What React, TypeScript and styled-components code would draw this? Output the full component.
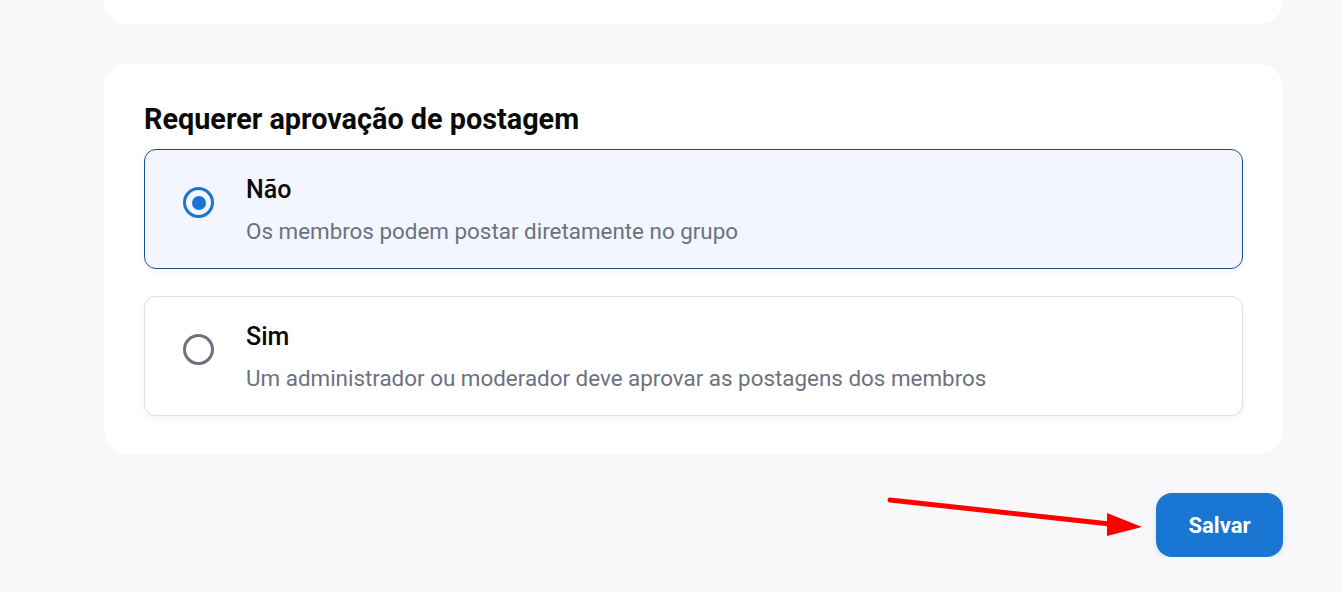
import React, { useState } from "react";
import styled, { createGlobalStyle } from "styled-components";

const GlobalStyle = createGlobalStyle`
  html, body {
    margin: 0;
    padding: 0;
    background: #f8f8fb;
    font-family: Roboto, "Noto Sans", Arial, sans-serif;
  }
`;

type Option = { value: string; label: string; hint: string };

const options: Option[] = [
  { value: "no", label: "Não", hint: "Os membros podem postar diretamente no grupo" },
  { value: "yes", label: "Sim", hint: "Um administrador ou moderador deve aprovar as postagens dos membros" },
];

const App = () => {
  const [selected, setSelected] = useState("no");

  return (
    <Page>
      <GlobalStyle />
      <TopCard />
      <Card>
        <Title>Requerer aprovação de postagem</Title>
        <OptionList>
          {options.map((o) => (
            <OptionRow
              key={o.value}
              $active={selected === o.value}
              onClick={() => setSelected(o.value)}
            >
              <Radio $active={selected === o.value} />
              <OptionText>
                <OptionLabel>{o.label}</OptionLabel>
                <OptionHint>{o.hint}</OptionHint>
              </OptionText>
            </OptionRow>
          ))}
        </OptionList>
      </Card>
      <Footer>
        <Arrow width="260" height="50" viewBox="0 0 260 50">
          <line x1="4" y1="7" x2="224" y2="31" stroke="#ff0000" strokeWidth="5" strokeLinecap="round" />
          <polygon points="256,34 221,43 221,20" fill="#ff0000" />
        </Arrow>
        <SaveButton>Salvar</SaveButton>
      </Footer>
    </Page>
  );
};

export default App;

const Page = styled.div`
  width: 1179px;
  margin-left: 104px;
  display: flex;
  flex-direction: column;
  gap: 40px;
`;

const TopCard = styled.div`
  height: 24px;
  background: #ffffff;
  border-radius: 0 0 24px 24px;
`;

const Card = styled.div`
  background: #ffffff;
  border-radius: 24px;
  padding: 38px 40px 38px;
`;

const Title = styled.h2`
  margin: 0 0 13px;
  font-size: 28.8px;
  font-weight: 700;
  color: #0a0a0a;
  line-height: 34px;
`;

const OptionList = styled.div`
  display: flex;
  flex-direction: column;
  gap: 27px;
`;

const OptionRow = styled.div<{ $active: boolean }>`
  display: flex;
  align-items: flex-start;
  gap: 32px;
  height: 120px;
  box-sizing: border-box;
  padding: 25px 38px 0;
  border-radius: 12px;
  cursor: pointer;
  background: ${(p) => (p.$active ? "#f3f6fe" : "#ffffff")};
  border: 1px solid ${(p) => (p.$active ? "#1e4f8f" : "#dedede")};
  box-shadow: 0 2px 6px rgba(0, 0, 0, 0.05);
`;

const Radio = styled.span<{ $active: boolean }>`
  flex: none;
  margin-top: 12px;
  width: 31px;
  height: 31px;
  box-sizing: border-box;
  border-radius: 50%;
  border: 3px solid ${(p) => (p.$active ? "#1976d2" : "#6b7280")};
  display: flex;
  align-items: center;
  justify-content: center;
  &::after {
    content: "";
    width: 14px;
    height: 14px;
    border-radius: 50%;
    background: ${(p) => (p.$active ? "#1976d2" : "transparent")};
  }
`;

const OptionText = styled.div`
  display: flex;
  flex-direction: column;
  gap: 12px;
`;

const OptionLabel = styled.div`
  font-size: 25px;
  font-weight: 500;
  color: #0a0a0a;
  line-height: 30px;
`;

const OptionHint = styled.div`
  font-size: 22.4px;
  color: #6b7280;
  line-height: 28px;
`;

const Footer = styled.div`
  display: flex;
  justify-content: flex-end;
  align-items: flex-start;
  margin-top: -1px;
`;

const Arrow = styled.svg`
  margin-right: 10px;
`;

const SaveButton = styled.button`
  width: 127px;
  height: 64px;
  border: none;
  border-radius: 16px;
  background: #1976d2;
  color: #ffffff;
  font-family: Roboto, Arial, sans-serif;
  font-size: 22px;
  font-weight: 700;
  box-shadow: 0 2px 6px rgba(0, 0, 0, 0.1);
  cursor: pointer;
`;
